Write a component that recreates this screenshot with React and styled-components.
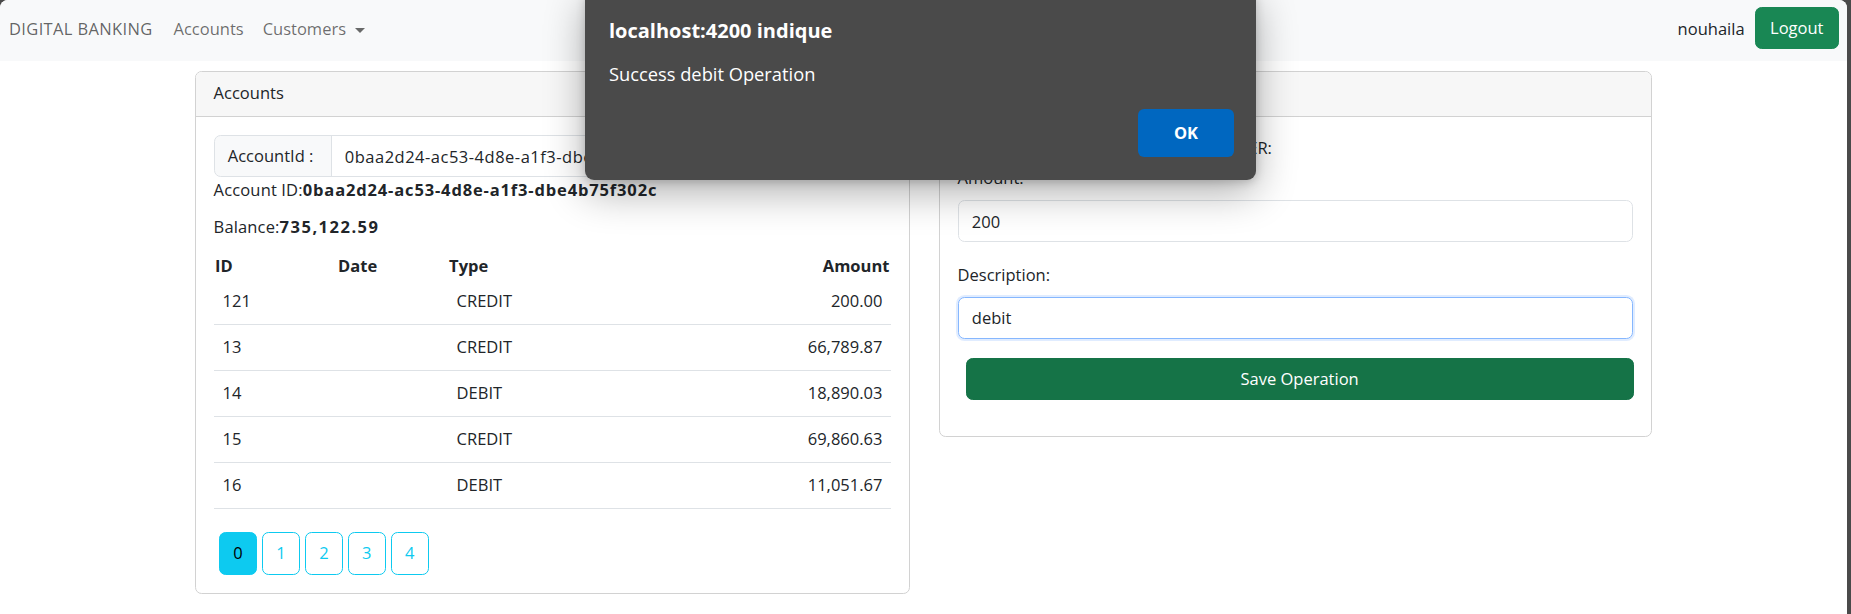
import React from 'react';
import styled, { createGlobalStyle } from 'styled-components';

const GlobalStyle = createGlobalStyle`
  html, body { margin: 0; padding: 0; background: #4a4a4a; }
  body {
    font-family: "Open Sans", "Noto Sans", sans-serif;
    font-size: 16.5px;
    line-height: 26.4px;
    color: #212529;
  }
  * { box-sizing: border-box; }
`;

const Window = styled.div`
  position: relative;
  width: 1847px;
  height: 614px;
  background: #fff;
  border-radius: 8px 8px 0 0;
  overflow: hidden;
`;

const Navbar = styled.nav`
  height: 61px;
  background: #f8f9fa;
  display: flex;
  align-items: center;
  padding: 0 8px 2px 9px;
`;

const Brand = styled.a`
  color: rgba(0, 0, 0, 0.62);
  margin-right: 21px;
  letter-spacing: 0.35px;
  text-decoration: none;
`;

const NavList = styled.div`
  display: flex;
  align-items: center;
  gap: 19px;
`;

const NavLink = styled.a`
  color: rgba(0, 0, 0, 0.58);
  text-decoration: none;
  display: inline-flex;
  align-items: center;
`;

const Caret = styled.span`
  display: inline-block;
  margin-left: 9px;
  margin-top: 1px;
  width: 0;
  height: 0;
  border-top: 5.5px solid rgba(0, 0, 0, 0.58);
  border-left: 5px solid transparent;
  border-right: 5px solid transparent;
`;

const NavRight = styled.div`
  margin-left: auto;
  display: flex;
  align-items: center;
  gap: 10px;
`;

const UserName = styled.span`
  color: #212529;
`;

const Button = styled.button`
  font-family: inherit;
  font-size: 16.5px;
  line-height: 26.4px;
  border-radius: 6.6px;
  border: 1px solid ${p => p.$border || p.$bg};
  background: ${p => p.$bg};
  color: ${p => p.$color};
  padding: 7.1px ${p => p.$px || 13.2}px;
  cursor: pointer;
`;

const LogoutButton = styled(Button)`
  margin-bottom: 3px;
`;

const Main = styled.main`
  padding: 9.5px 0 0 195px;
`;

const Columns = styled.div`
  display: grid;
  grid-template-columns: 715px 713px;
  column-gap: 29px;
  align-items: start;
`;

const Card = styled.section`
  border: 1px solid #d2d2d2;
  border-radius: 6.6px;
  background: #fff;
  overflow: hidden;
`;

const CardHeader = styled.div`
  background: #f7f7f7;
  border-bottom: 1px solid #d2d2d2;
  padding: 8.8px 17.6px;
  line-height: 26.4px;
  color: #212529;
`;

const CardBody = styled.div`
  padding: 18.6px 17.6px ${p => p.$pb || 17.6}px;
`;

const InputGroup = styled.div`
  display: flex;
  height: 42px;
`;

const Addon = styled.label`
  width: 118px;
  flex: none;
  display: flex;
  align-items: center;
  padding: 0 13.2px;
  background: #f8f9fa;
  border: 1px solid #dee2e6;
  border-radius: 6.6px 0 0 6.6px;
  color: #212529;
`;

const GroupInput = styled.input`
  flex: 1;
  min-width: 0;
  margin-left: -1px;
  border: 1px solid #dee2e6;
  padding: 0 13.2px;
  font-family: inherit;
  font-size: 16.5px;
  letter-spacing: 0.5px;
  color: #212529;
  outline: none;
`;

const SearchButton = styled(Button)`
  border-radius: 0 6.6px 6.6px 0;
  padding-top: 0;
  padding-bottom: 0;
`;

const InfoLine = styled.div`
  line-height: 26.4px;
  letter-spacing: 0.15px;
  margin-top: ${p => p.$mt || 0}px;
`;

const Strong = styled.b`
  font-weight: 700;
  letter-spacing: ${p => p.$ls || 0.75}px;
`;

const Table = styled.div`
  margin-top: 12.5px;
`;

const TRow = styled.div`
  display: grid;
  grid-template-columns: 123px 111px 1fr 1fr;
  height: ${p => (p.$head ? 26 : 46)}px;
  align-items: center;
  border-bottom: ${p => (p.$head ? 'none' : '1px solid #dee2e6')};
`;

const Cell = styled.div`
  padding: 0 ${p => (p.$head ? 2 : 9)}px;
  padding-left: ${p => (p.$head ? 1.5 : 9)}px;
  font-weight: ${p => (p.$head ? 700 : 400)};
  text-align: ${p => (p.$right ? 'right' : 'left')};
  color: #212529;
`;

const Pager = styled.div`
  display: flex;
  gap: 5.2px;
  margin-top: 23.7px;
  padding-left: 5.4px;
`;

const PageButton = styled(Button)`
  width: 37.8px;
  padding-left: 0;
  padding-right: 0;
  text-align: center;
`;

const FormStack = styled.form`
  display: flex;
  flex-direction: column;
`;

const RadioRow = styled.div`
  display: flex;
  align-items: center;
  gap: 19.6px;
  height: 26.4px;
  padding-left: 3px;
`;

const RadioItem = styled.label`
  display: flex;
  align-items: center;
  gap: 8.8px;
`;

const Radio = styled.span`
  width: 17.6px;
  height: 17.6px;
  border-radius: 50%;
  border: 1px solid #dee2e6;
  background: #fff;
`;

const FieldLabel = styled.label`
  display: block;
  line-height: 26.4px;
  margin-top: ${p => p.$mt || 0}px;
  margin-bottom: 8.8px;
`;

const TextInput = styled.input`
  height: 42px;
  width: 100%;
  border: 1px solid ${p => (p.$focus ? '#86b7fe' : '#dee2e6')};
  box-shadow: ${p => (p.$focus ? '0 0 0 2px rgba(13, 110, 253, 0.13)' : 'none')};
  border-radius: 6.6px;
  padding: 0 13.2px;
  font-family: inherit;
  font-size: 16.5px;
  color: #212529;
  outline: none;
`;

const SaveButton = styled(Button)`
  margin: 19px 0 17.6px 8px;
  width: 668px;
  height: 41.6px;
  padding-top: 0;
  padding-bottom: 0;
`;

const Dialog = styled.div`
  position: absolute;
  left: 585px;
  top: -10px;
  width: 671px;
  height: 190px;
  background: #4a4a4a;
  border-radius: 9px;
  box-shadow: 0 12px 40px rgba(0, 0, 0, 0.32), 0 2px 10px rgba(0, 0, 0, 0.18);
  padding: 28px 22px 0 24px;
  color: #fff;
  display: flex;
  flex-direction: column;
`;

const DialogTitle = styled.div`
  font-weight: 700;
  font-size: 20px;
  line-height: 26px;
`;

const DialogMessage = styled.div`
  font-size: 18.3px;
  line-height: 24px;
  margin-top: 18px;
`;

const DialogActions = styled.div`
  display: flex;
  justify-content: flex-end;
  margin-top: 23.3px;
`;

const OkButton = styled.button`
  width: 96px;
  height: 47.4px;
  border: none;
  border-radius: 6px;
  background: #0067c0;
  color: #fff;
  font-family: inherit;
  font-weight: 700;
  font-size: 16.5px;
`;

const ops = [
  { id: 121, type: 'CREDIT', amount: '200.00' },
  { id: 13, type: 'CREDIT', amount: '66,789.87' },
  { id: 14, type: 'DEBIT', amount: '18,890.03' },
  { id: 15, type: 'CREDIT', amount: '69,860.63' },
  { id: 16, type: 'DEBIT', amount: '11,051.67' },
];

const accountId = '0baa2d24-ac53-4d8e-a1f3-dbe4b75f302c';

export default function App() {
  return (
    <>
      <GlobalStyle />
      <Window>
        <Navbar>
          <Brand href="#">DIGITAL BANKING</Brand>
          <NavList>
            <NavLink href="#">Accounts</NavLink>
            <NavLink href="#">Customers<Caret /></NavLink>
          </NavList>
          <NavRight>
            <UserName>nouhaila</UserName>
            <LogoutButton $bg="#198754" $color="#fff" $px={14.5}>Logout</LogoutButton>
          </NavRight>
        </Navbar>
        <Main>
          <Columns>
            <Card>
              <CardHeader>Accounts</CardHeader>
              <CardBody $pb={18.6}>
                <InputGroup>
                  <Addon>AccountId :</Addon>
                  <GroupInput defaultValue={accountId} readOnly />
                  <SearchButton $bg="#0dcaf0" $color="#000">Search</SearchButton>
                </InputGroup>
                <InfoLine>Account ID:<Strong $ls={0.85}>{accountId}</Strong></InfoLine>
                <InfoLine $mt={10.2}>Balance:<Strong $ls={1.5}>735,122.59</Strong></InfoLine>
                <Table>
                  <TRow $head>
                    <Cell $head>ID</Cell>
                    <Cell $head>Date</Cell>
                    <Cell $head>Type</Cell>
                    <Cell $head $right>Amount</Cell>
                  </TRow>
                  {ops.map(o => (
                    <TRow key={o.id}>
                      <Cell>{o.id}</Cell>
                      <Cell></Cell>
                      <Cell>{o.type}</Cell>
                      <Cell $right>{o.amount}</Cell>
                    </TRow>
                  ))}
                </Table>
                <Pager>
                  {[0, 1, 2, 3, 4].map(n => (
                    <PageButton
                      key={n}
                      $bg={n === 0 ? '#0dcaf0' : '#fff'}
                      $border="#0dcaf0"
                      $color={n === 0 ? '#000' : '#0dcaf0'}
                    >
                      {n}
                    </PageButton>
                  ))}
                </Pager>
              </CardBody>
            </Card>
            <Card>
              <CardHeader>Operations</CardHeader>
              <CardBody $pb={18.6}>
                <FormStack onSubmit={e => e.preventDefault()}>
                  <RadioRow>
                    <RadioItem><Radio />DEBIT:</RadioItem>
                    <RadioItem><Radio />CREDIT:</RadioItem>
                    <RadioItem><Radio />TRANSFER:</RadioItem>
                  </RadioRow>
                  <FieldLabel $mt={3.8}>Amount:</FieldLabel>
                  <TextInput defaultValue="200" readOnly />
                  <FieldLabel $mt={19.3}>Description:</FieldLabel>
                  <TextInput defaultValue="debit" readOnly $focus />
                  <SaveButton type="submit" $bg="#157347" $color="#fff">Save Operation</SaveButton>
                </FormStack>
              </CardBody>
            </Card>
          </Columns>
        </Main>
        <Dialog role="alertdialog">
          <DialogTitle>localhost:4200 indique</DialogTitle>
          <DialogMessage>Success debit Operation</DialogMessage>
          <DialogActions>
            <OkButton>OK</OkButton>
          </DialogActions>
        </Dialog>
      </Window>
    </>
  );
}
